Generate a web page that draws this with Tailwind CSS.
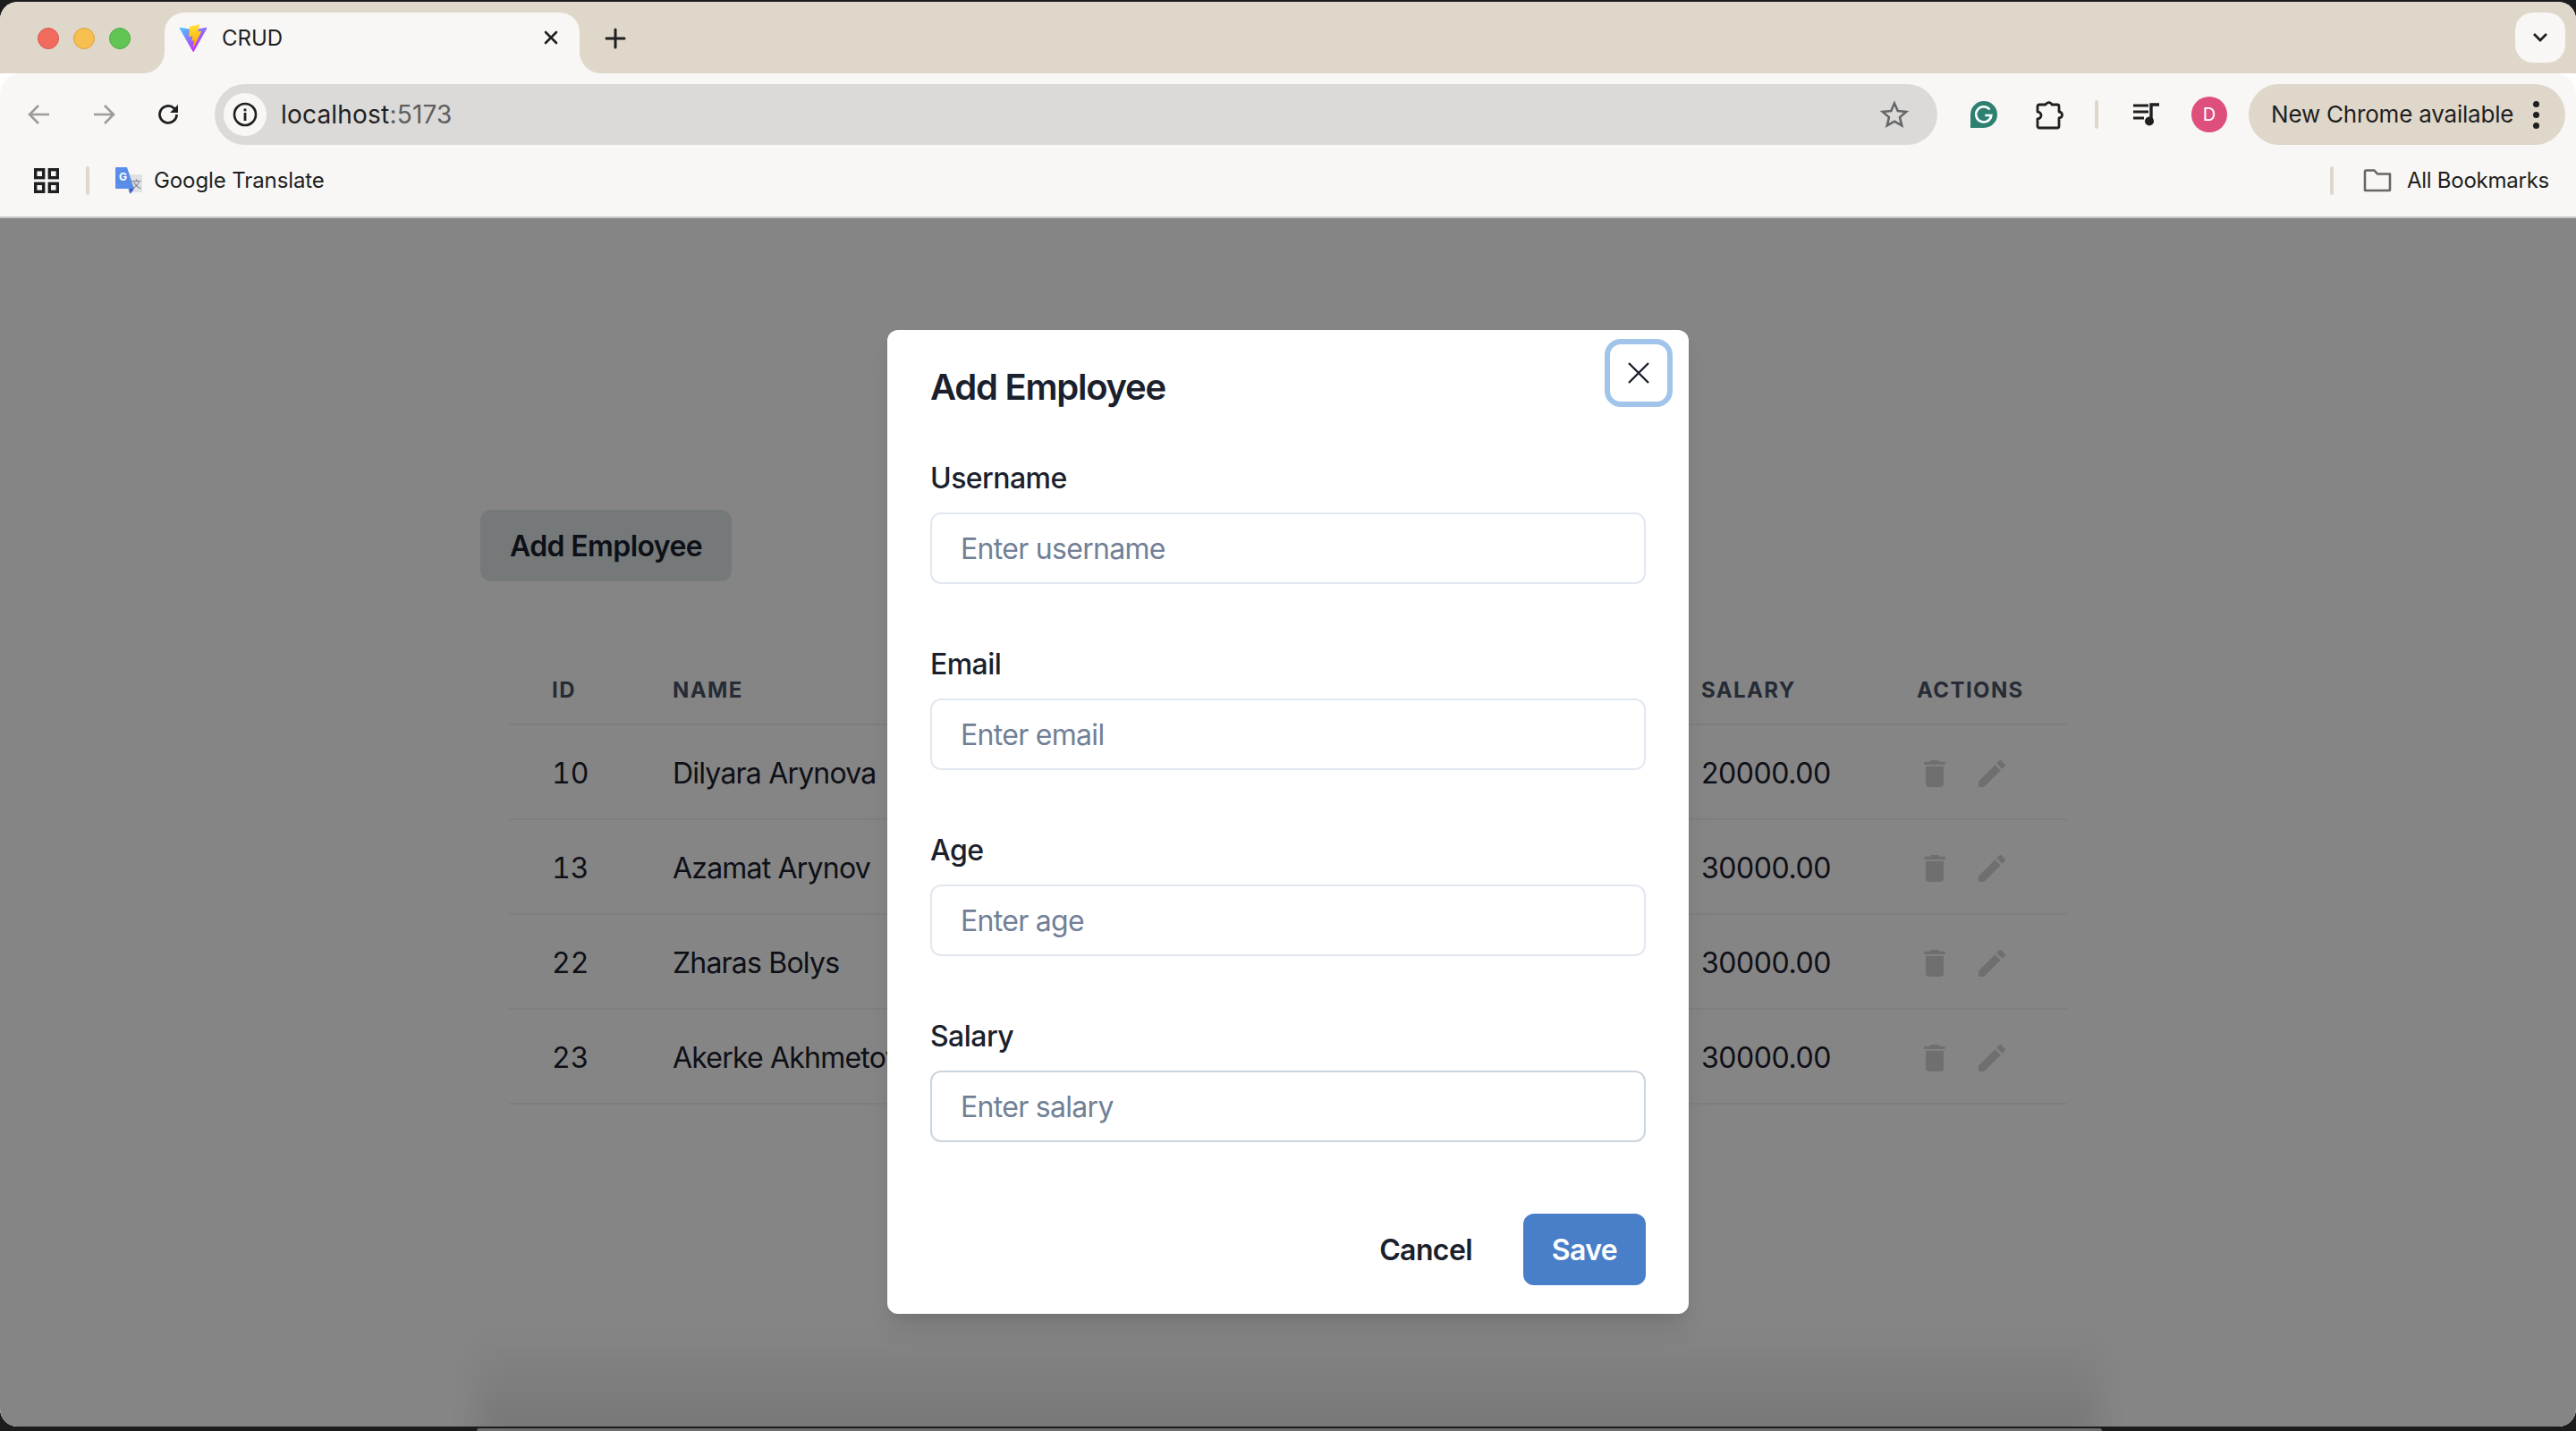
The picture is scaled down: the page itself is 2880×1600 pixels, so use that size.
<!doctype html>
<html>
<head>
<meta charset="utf-8">
<script src="https://cdn.jsdelivr.net/npm/@tailwindcss/browser@4"></script>
<title>CRUD</title>
</head>
<body class="m-0 w-[2880px] h-[1600px] overflow-hidden bg-[#1c1c1c] font-[Inter,sans-serif]">
<div class="relative w-[2880px] h-[1593px] mt-[2px] -mb-[2px] rounded-[20px] overflow-hidden bg-white flex flex-col">

  <!-- tab strip -->
  <div class="h-[80px] shrink-0 bg-[#dfd7ca] flex items-end relative">
    <div class="flex items-center gap-[16px] self-start mt-[29px] ml-[42px] w-[142px]">
      <span class="w-[24px] h-[24px] rounded-full bg-[#f16c5f] border border-[#d9564a]"></span>
      <span class="w-[24px] h-[24px] rounded-full bg-[#f6bf50] border border-[#dca33c]"></span>
      <span class="w-[24px] h-[24px] rounded-full bg-[#61c554] border border-[#4eab43]"></span>
    </div>
    <div class="relative w-[464px] h-[68px] bg-[#f8f7f5] rounded-t-[22px] flex items-center pl-[16px] pb-[10px]">
      <svg class="absolute -left-[24px] bottom-0" width="24" height="24" viewBox="0 0 24 24"><path d="M24 0v24H0A24 24 0 0 0 24 0z" fill="#f8f7f5"/></svg>
      <svg class="absolute -right-[24px] bottom-0" width="24" height="24" viewBox="0 0 24 24"><path d="M0 0v24h24A24 24 0 0 1 0 0z" fill="#f8f7f5"/></svg>
      <svg class="w-[32px] h-[32px] shrink-0" viewBox="0 0 410 404" fill="none">
        <path d="M399.641 59.5246L215.643 388.545C211.844 395.338 202.084 395.378 198.228 388.618L10.5817 59.5563C6.38087 52.1896 12.6802 43.2665 21.0281 44.7586L205.223 77.6824C206.398 77.8924 207.601 77.8904 208.776 77.6763L389.119 44.8058C397.439 43.2894 403.768 52.1434 399.641 59.5246Z" fill="url(#va)"/>
        <path d="M292.965 1.5744L156.801 28.2552C154.563 28.6937 152.906 30.5903 152.771 32.8664L144.395 174.33C144.198 177.662 147.258 180.248 150.51 179.498L188.42 170.749C191.967 169.931 195.172 173.055 194.443 176.622L183.18 231.775C182.422 235.487 185.907 238.661 189.532 237.56L212.947 230.446C216.577 229.344 220.065 232.527 219.297 236.242L201.398 322.875C200.278 328.294 207.486 331.249 210.492 326.603L212.5 323.5L323.454 102.072C325.312 98.3645 322.108 94.137 318.036 94.9228L279.014 102.454C275.347 103.161 272.227 99.746 273.262 96.1583L298.731 7.86689C299.767 4.27314 296.636 0.855181 292.965 1.5744Z" fill="url(#vb)"/>
        <defs>
          <linearGradient id="va" x1="6" y1="33" x2="235" y2="344" gradientUnits="userSpaceOnUse"><stop stop-color="#41D1FF"/><stop offset="1" stop-color="#BD34FE"/></linearGradient>
          <linearGradient id="vb" x1="194" y1="8" x2="236" y2="292" gradientUnits="userSpaceOnUse"><stop stop-color="#FFEA83"/><stop offset=".08" stop-color="#FFDD35"/><stop offset="1" stop-color="#FFA800"/></linearGradient>
        </defs>
      </svg>
      <span class="ml-[16px] text-[24px] leading-[32px] text-[#1f1f1f]">CRUD</span>
      <svg class="absolute left-[424px] top-[20px]" width="16" height="16" viewBox="0 0 16 16"><path d="M2 2l12 12M14 2L2 14" stroke="#1f1f1f" stroke-width="2.6" stroke-linecap="round"/></svg>
    </div>
    <svg class="self-start mt-[29px] ml-[28px]" width="24" height="24" viewBox="0 0 24 24"><path d="M12 2v20M2 12h20" stroke="#1f1f1f" stroke-width="3" stroke-linecap="round"/></svg>
    <div class="absolute left-[2812px] top-[12px] w-[56px] h-[56px] rounded-[20px] bg-[#f8f7f5] flex items-center justify-center">
      <svg width="18" height="12" viewBox="0 0 18 12"><path d="M2 2l7 7 7-7" fill="none" stroke="#1f1f1f" stroke-width="2.8"/></svg>
    </div>
  </div>

  <!-- toolbar -->
  <div class="h-[80px] shrink-0 bg-[#f8f7f5] rounded-t-[24px] flex items-start pt-[12px] pl-[20px] relative z-10">
    <div class="w-[48px] h-[68px] flex items-center justify-center"><svg width="26" height="24" viewBox="0 0 26 24"><path d="M24 12H3M12 2L2 12l10 10" fill="none" stroke="#9b9b9b" stroke-width="2.6"/></svg></div>
    <div class="w-[48px] h-[68px] ml-[24px] flex items-center justify-center"><svg width="26" height="24" viewBox="0 0 26 24"><path d="M2 12h21M14 2l10 10-10 10" fill="none" stroke="#9b9b9b" stroke-width="2.6"/></svg></div>
    <div class="w-[48px] h-[68px] ml-[24px] flex items-center justify-center"><svg width="26" height="26" viewBox="0 0 26 26"><path d="M22.5 13a9.5 9.5 0 1 1-3-7L23 9" fill="none" stroke="#1f1f1f" stroke-width="2.8"/><path d="M24 2v9h-9z" fill="#1f1f1f"/></svg></div>
    <div class="ml-[28px] w-[1926px] h-[68px] rounded-full bg-[#dbdad8] flex items-center pl-[10px] pr-[30px]">
      <div class="w-[48px] h-[48px] rounded-full bg-[#f8f7f5] flex items-center justify-center">
        <svg width="28" height="28" viewBox="0 0 28 28"><circle cx="14" cy="14" r="12" fill="none" stroke="#1f1f1f" stroke-width="2.6"/><rect x="12.6" y="12" width="2.8" height="9" fill="#1f1f1f"/><rect x="12.6" y="7.5" width="2.8" height="2.8" fill="#1f1f1f"/></svg>
      </div>
      <span class="ml-[16px] text-[28px] leading-[36px] tracking-[0.2px] text-[#1f1f1f]">localhost<span class="text-[#5f5f5f]">:5173</span></span>
      <svg class="ml-auto" width="36" height="36" viewBox="0 0 24 24"><path d="M12 3.6l2.5 5.8 6.3.6-4.8 4.1 1.5 6.2L12 17.1l-5.5 3.2L8 14.1 3.2 10l6.3-.6z" fill="none" stroke="#666" stroke-width="1.7" stroke-linejoin="miter"/></svg>
    </div>
    <div class="ml-[37px] h-[68px] flex items-center">
      <svg width="30" height="30" viewBox="0 0 30 30"><path d="M15 0a15 15 0 1 1 0 30H0V15A15 15 0 0 1 15 0z" fill="#2e8170"/><path d="M21.5 9.5A8.6 8.6 0 1 0 23.3 16h-7" fill="none" stroke="#fff" stroke-width="2.6"/></svg>
    </div>
    <div class="ml-[42px] h-[68px] flex items-center">
      <svg width="32" height="34" viewBox="0 0 32 34"><path d="M5 6h7a4 4 0 0 1 6-1.5A4 4 0 0 1 19 6h6a2 2 0 0 1 2 2v6a3.5 3.5 0 0 1 0 7v9a2 2 0 0 1-2 2H5a2 2 0 0 1-2-2v-8a4 4 0 0 0 0-8V8a2 2 0 0 1 2-2z" fill="none" stroke="#1f1f1f" stroke-width="2.8" stroke-linejoin="round"/></svg>
    </div>
    <div class="ml-[35px] mt-[18px] w-[4px] h-[32px] rounded-full bg-[#dfd7ca]"></div>
    <div class="ml-[38px] h-[68px] flex items-center">
      <svg width="32" height="26" viewBox="0 0 32 26"><path d="M1 3h17M1 10h17M1 17h12" stroke="#1f1f1f" stroke-width="3"/><path d="M21 21V2h9" fill="none" stroke="#1f1f1f" stroke-width="3.4"/><circle cx="19" cy="20.5" r="5" fill="#1f1f1f"/></svg>
    </div>
    <div class="ml-[34px] mt-[14px] w-[40px] h-[40px] rounded-full bg-[#de4f7c] flex items-center justify-center text-white text-[20px] leading-none">D</div>
    <div class="ml-[24px] w-[354px] h-[68px] rounded-full bg-[#dfd7ca] flex items-center pl-[25px]">
      <span class="text-[26px] leading-[34px] tracking-[-0.2px] text-[#1f1f1f] whitespace-nowrap">New Chrome available</span>
      <div class="ml-[22px] flex flex-col gap-[5px]">
        <span class="w-[7px] h-[7px] rounded-full bg-[#1f1f1f]"></span>
        <span class="w-[7px] h-[7px] rounded-full bg-[#1f1f1f]"></span>
        <span class="w-[7px] h-[7px] rounded-full bg-[#1f1f1f]"></span>
      </div>
    </div>
  </div>

  <!-- bookmarks -->
  <div class="h-[82px] shrink-0 bg-[#f8f7f5] border-b-2 border-[#c9c9c7] flex items-center pl-[38px] text-[24px] text-[#1f1f1f]">
    <svg width="28" height="28" viewBox="0 0 28 28"><g fill="none" stroke="#1f1f1f" stroke-width="3.4"><rect x="1.7" y="1.7" width="9" height="9"/><rect x="17.3" y="1.7" width="9" height="9"/><rect x="1.7" y="17.3" width="9" height="9"/><rect x="17.3" y="17.3" width="9" height="9"/></g></svg>
    <div class="ml-[30px] w-[4px] h-[32px] rounded-full bg-[#dfd7ca]"></div>
    <svg class="ml-[29px]" width="30" height="30" viewBox="0 0 30 30"><rect x="14" y="8" width="16" height="20" fill="#dfe1e5"/><path d="M1 0h12l8 24H1a1 1 0 0 1-1-1V1a1 1 0 0 1 1-1z" fill="#5a8de8"/><path d="M15 24h6l-4.500 6z" fill="#3b5fc4"/><text x="4" y="15" font-size="12" font-weight="700" fill="#fff" font-family="Inter">G</text><text x="18" y="23" font-size="11" fill="#70757a" font-family="Noto Sans CJK SC">文</text></svg>
    <span class="ml-[13px] tracking-[-0.1px] whitespace-nowrap">Google Translate</span>
    <div class="ml-auto w-[4px] h-[32px] rounded-full bg-[#dfd7ca]"></div>
    <svg class="ml-[33px]" width="32" height="26" viewBox="0 0 32 26"><path d="M2 3a1.500 1.500 0 0 1 1.500-1.500h9l3.500 4h14v18a.5.5 0 0 1-.5.5H2.500a.5.5 0 0 1-.5-.5z" fill="none" stroke="#666" stroke-width="2.6" stroke-linejoin="round"/></svg>
    <span class="ml-[17px] mr-[30px] tracking-[-0.25px] whitespace-nowrap">All Bookmarks</span>
  </div>

  <!-- page under the dialog -->
  <div class="flex-1 relative bg-white">
    <div class="w-[1806px] mx-auto pt-[326px]">
      <button class="h-[80px] w-[281px] pt-[2px] rounded-[12px] bg-[#e2e8ea] text-[32px] font-semibold tracking-[-0.6px] text-[#1a202c]">Add Employee</button>
      <div class="mx-[32px] mt-[81px] text-[#1a202c]">
        <div class="h-[80px] pt-[3px] grid grid-cols-[135px_1150px_241px_216px] items-center border-b-2 border-[#edf2f7] text-[24px] font-bold tracking-[1.4px] text-[#4a5568]">
          <div class="pl-[48px]">ID</div><div class="pl-[48px]">NAME</div><div class="pl-[48px]">SALARY</div><div class="pl-[48px]">ACTIONS</div>
        </div>
        <div class="h-[106px] pt-[3px] grid grid-cols-[135px_1150px_241px_216px] items-center border-b-2 border-[#edf2f7] text-[32px]">
          <div class="pl-[48px] tabular-nums">10</div><div class="pl-[48px] tracking-[-0.8px]">Dilyara Arynova</div><div class="pl-[48px] tracking-[-0.45px]">20000.00</div>
          <div class="pl-[56px] flex items-center gap-[37px] text-[#d5d5d8]"><svg class="w-[24px] h-[30px] fill-current" viewBox="5 3 14 18"><path d="M6 19c0 1.100.9 2 2 2h8c1.100 0 2-.9 2-2V7H6v12zM19 4h-3.500l-1-1h-5l-1 1H5v2h14V4z"/></svg><svg class="w-[30px] h-[30px] fill-current" viewBox="3 3 18 18"><path d="M3 17.250V21h3.750L17.810 9.940l-3.750-3.750L3 17.250zM20.710 7.040a.996.996 0 000-1.410l-2.340-2.340a.996.996 0 00-1.410 0l-1.830 1.830 3.750 3.750 1.830-1.830z"/></svg></div>
        </div>
        <div class="h-[106px] pt-[3px] grid grid-cols-[135px_1150px_241px_216px] items-center border-b-2 border-[#edf2f7] text-[32px]">
          <div class="pl-[48px] tabular-nums">13</div><div class="pl-[48px] tracking-[-0.8px]">Azamat Arynov</div><div class="pl-[48px] tracking-[-0.45px]">30000.00</div>
          <div class="pl-[56px] flex items-center gap-[37px] text-[#d5d5d8]"><svg class="w-[24px] h-[30px] fill-current" viewBox="5 3 14 18"><path d="M6 19c0 1.100.9 2 2 2h8c1.100 0 2-.9 2-2V7H6v12zM19 4h-3.500l-1-1h-5l-1 1H5v2h14V4z"/></svg><svg class="w-[30px] h-[30px] fill-current" viewBox="3 3 18 18"><path d="M3 17.250V21h3.750L17.810 9.940l-3.750-3.750L3 17.250zM20.710 7.040a.996.996 0 000-1.410l-2.340-2.340a.996.996 0 00-1.410 0l-1.830 1.830 3.750 3.750 1.830-1.830z"/></svg></div>
        </div>
        <div class="h-[106px] pt-[3px] grid grid-cols-[135px_1150px_241px_216px] items-center border-b-2 border-[#edf2f7] text-[32px]">
          <div class="pl-[48px] tabular-nums">22</div><div class="pl-[48px] tracking-[-0.8px]">Zharas Bolys</div><div class="pl-[48px] tracking-[-0.45px]">30000.00</div>
          <div class="pl-[56px] flex items-center gap-[37px] text-[#d5d5d8]"><svg class="w-[24px] h-[30px] fill-current" viewBox="5 3 14 18"><path d="M6 19c0 1.100.9 2 2 2h8c1.100 0 2-.9 2-2V7H6v12zM19 4h-3.500l-1-1h-5l-1 1H5v2h14V4z"/></svg><svg class="w-[30px] h-[30px] fill-current" viewBox="3 3 18 18"><path d="M3 17.250V21h3.750L17.810 9.940l-3.750-3.750L3 17.250zM20.710 7.040a.996.996 0 000-1.410l-2.340-2.340a.996.996 0 00-1.410 0l-1.830 1.830 3.750 3.750 1.830-1.830z"/></svg></div>
        </div>
        <div class="h-[106px] pt-[3px] grid grid-cols-[135px_1150px_241px_216px] items-center border-b-2 border-[#edf2f7] text-[32px]">
          <div class="pl-[48px] tabular-nums">23</div><div class="pl-[48px] tracking-[-0.8px]">Akerke Akhmetova</div><div class="pl-[48px] tracking-[-0.45px]">30000.00</div>
          <div class="pl-[56px] flex items-center gap-[37px] text-[#d5d5d8]"><svg class="w-[24px] h-[30px] fill-current" viewBox="5 3 14 18"><path d="M6 19c0 1.100.9 2 2 2h8c1.100 0 2-.9 2-2V7H6v12zM19 4h-3.500l-1-1h-5l-1 1H5v2h14V4z"/></svg><svg class="w-[30px] h-[30px] fill-current" viewBox="3 3 18 18"><path d="M3 17.250V21h3.750L17.810 9.940l-3.750-3.750L3 17.250zM20.710 7.040a.996.996 0 000-1.410l-2.340-2.340a.996.996 0 00-1.410 0l-1.830 1.830 3.750 3.750 1.830-1.830z"/></svg></div>
        </div>
      </div>
    </div>

    <!-- overlay -->
    <div class="absolute inset-0 bg-black/48"></div>
    <div class="absolute left-[535px] right-[535px] -bottom-[20px] h-[120px] bg-gradient-to-t from-black/12 to-transparent blur-[16px]"></div>

    <!-- dialog -->
    <div class="absolute left-[992px] top-[125px] w-[896px] h-[1100px] bg-white rounded-[12px] shadow-[0_20px_30px_-6px_rgba(0,0,0,0.1),0_8px_12px_-4px_rgba(0,0,0,0.05)] flex flex-col">
      <div class="px-[48px] pt-[34px] pb-[30px] text-[40px] leading-[60px] font-semibold tracking-[-1.25px] text-[#1a202c]">Add Employee</div>
      <button class="absolute right-[24px] top-[16px] w-[64px] h-[64px] rounded-[12px] shadow-[0_0_0_6px_#a0c4ea] flex items-center justify-center">
        <svg width="24" height="24" viewBox="0 0 24 24"><path d="M1 1l22 22M23 1L1 23" stroke="#1a202c" stroke-width="2.400"/></svg>
      </button>
      <div class="px-[48px] pt-[16px] flex flex-col gap-[64px]">
        <div>
          <label class="block pt-[2px] text-[32px] leading-[48px] font-medium tracking-[-0.55px] text-[#1a202c] mb-[14px]">Username</label>
          <input class="block w-full h-[80px] px-[32px] border-2 border-[#e2e8f0] rounded-[12px] text-[32px] tracking-[-0.7px] outline-none placeholder:text-[#718096]" placeholder="Enter username">
        </div>
        <div>
          <label class="block pt-[2px] text-[32px] leading-[48px] font-medium tracking-[-0.55px] text-[#1a202c] mb-[14px]">Email</label>
          <input class="block w-full h-[80px] px-[32px] border-2 border-[#e2e8f0] rounded-[12px] text-[32px] tracking-[-0.7px] outline-none placeholder:text-[#718096]" placeholder="Enter email">
        </div>
        <div>
          <label class="block pt-[2px] text-[32px] leading-[48px] font-medium tracking-[-0.55px] text-[#1a202c] mb-[14px]">Age</label>
          <input class="block w-full h-[80px] px-[32px] border-2 border-[#e2e8f0] rounded-[12px] text-[32px] tracking-[-0.7px] outline-none placeholder:text-[#718096]" placeholder="Enter age">
        </div>
        <div>
          <label class="block pt-[2px] text-[32px] leading-[48px] font-medium tracking-[-0.55px] text-[#1a202c] mb-[14px]">Salary</label>
          <input class="block w-full h-[80px] px-[32px] border-2 border-[#cbd5e0] rounded-[12px] text-[32px] tracking-[-0.7px] outline-none placeholder:text-[#718096]" placeholder="Enter salary">
        </div>
      </div>
      <div class="mt-[80px] px-[48px] flex justify-end items-center">
        <button class="h-[80px] pt-[1px] px-[33px] mr-[24px] text-[32px] font-semibold tracking-[-0.6px] text-[#1a202c]">Cancel</button>
        <button class="h-[80px] pt-[1px] w-[137px] rounded-[12px] bg-[#487fc8] text-[32px] font-semibold tracking-[-0.6px] text-white">Save</button>
      </div>
    </div>
  </div>
</div>
<div class="absolute left-[533px] top-[1597px] w-[1817px] h-[3px] rounded-t-[8px] bg-[#6e6e6e]"></div>
</body>
</html>
